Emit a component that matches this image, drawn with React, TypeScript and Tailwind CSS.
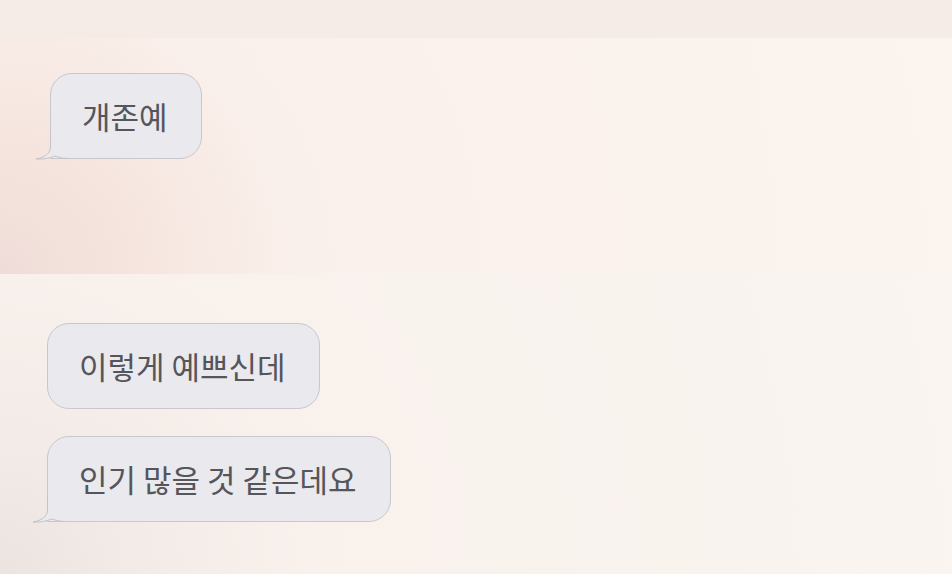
const font = {
    fontFamily: '"Noto Sans CJK KR", "Noto Sans", sans-serif',
};

function Tail() {
    return (
        <svg
            width="34"
            height="28"
            viewBox="0 0 34 28"
            className="absolute -left-[16px] -bottom-[2px]"
        >
            <path
                d="M15.5 0 L15.5 15 C15.5 21 10 25.5 1 27 C9 27.5 15 26 20 24 C24 25.5 28 26.5 34 26.5 L34 0 Z"
                fill="#e9e9ee"
            />
            <path
                d="M15.5 0 L15.5 15 C15.5 21 10 25.5 1 27 C9 27.5 15 26 20 24 C24 25.5 28 26.5 34 26.5"
                fill="none"
                stroke="#c4c3c8"
                strokeWidth="1"
            />
        </svg>
    );
}

function Bubble({ text, tail }: { text: string; tail?: boolean }) {
    return (
        <div
            className={`
                relative
                flex
                h-[86px]
                w-fit
                items-center
                border
                border-[#c8c7cc]
                bg-[#e9e9ee]
                pl-[31px]
                pr-[33px]
                text-[31px]
                font-normal
                text-[#55555a]
                rounded-[22px]
                ${tail ? "rounded-bl-none" : ""}
            `}
            style={font}
        >
            {text}
            {tail && <Tail />}
        </div>
    );
}

export default function App() {
    return (
        <div className="flex h-[574px] w-[952px] flex-col overflow-hidden bg-[#f7eee9]">

            {/* top strip */}

            <div className="h-[38px] bg-[#f5ece7]" />

            {/* first shot */}

            <div className="h-[236px] bg-[radial-gradient(circle_at_0%_100%,#efdcd8_0px,#f6e5df_140px,#faf0eb_300px,#fbf4ef_100%)] pl-[50px] pt-[35px]">
                <Bubble text="개존예" tail />
            </div>

            {/* second shot */}

            <div className="flex flex-1 flex-col gap-[27px] bg-[radial-gradient(circle_at_0%_100%,#ebe4e0_0px,#f3ece8_160px,#f8f1ec_320px,#faf5f1_100%)] pl-[47px] pt-[49px]">
                <Bubble text="이렇게 예쁘신데" />
                <Bubble text="인기 많을 것 같은데요" tail />
            </div>

        </div>
    );
}
